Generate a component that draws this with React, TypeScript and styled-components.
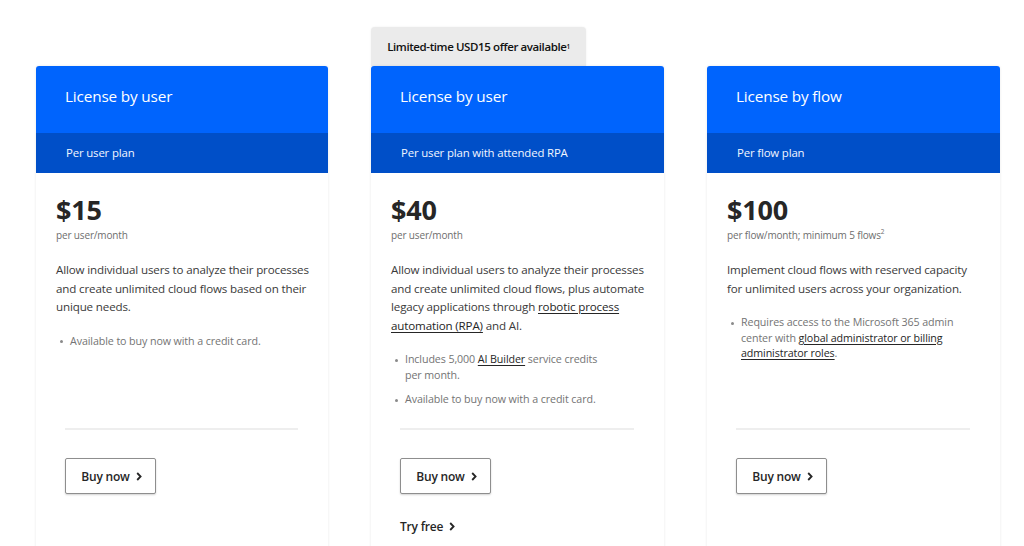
import React from "react";
import styled, { createGlobalStyle } from "styled-components";

const Global = createGlobalStyle`
  html, body { margin: 0; padding: 0; background: #fff; }
  body { font-family: "Open Sans", "Noto Sans", Arial, sans-serif; overflow: hidden; }
  * { box-sizing: border-box; }
`;

const Page = styled.div`
  width: 1024px;
  height: 546px;
  overflow: hidden;
  padding: 27px 0 0 36px;
`;

const Row = styled.div`
  display: grid;
  grid-template-columns: 292px 293px 293px;
  column-gap: 43px;
  align-items: stretch;
`;

const Column = styled.div<{ $badge?: boolean }>`
  display: flex;
  flex-direction: column;
  padding-top: ${(p) => (p.$badge ? 0 : 39)}px;
`;

const Badge = styled.div`
  align-self: flex-start;
  height: 39px;
  width: 215px;
  background: #ebebeb;
  border-radius: 4px 4px 0 0;
  display: flex;
  align-items: center;
  justify-content: center;
  font-size: 11.5px;
  font-weight: 600;
  letter-spacing: -0.4px;
  color: #111;
  box-shadow: 0 0 2px rgba(0, 0, 0, 0.08);
`;

const Sup = styled.sup`
  font-size: 6.5px;
  vertical-align: 5px;
  line-height: 0;
`;

const Card = styled.div`
  display: flex;
  flex-direction: column;
  height: 520px;
  background: #fff;
  border-radius: 3px 3px 0 0;
  box-shadow: 0 0 3px rgba(0, 0, 0, 0.09);
`;

const Header = styled.div`
  height: 67px;
  background: #0064fd;
  border-radius: 3px 3px 0 0;
  color: #fff;
  display: flex;
  align-items: center;
  padding: 0 0 8px 29px;
  font-size: 15.3px;
  letter-spacing: -0.15px;
`;

const SubHeader = styled.div`
  height: 40px;
  background: #004fc8;
  color: #f2f6ff;
  display: flex;
  align-items: center;
  padding: 0 0 1px 30px;
  font-size: 11.4px;
  letter-spacing: -0.15px;
`;

const Body = styled.div`
  flex: 1;
  padding: 21px 20px 0 20px;
  color: #333;
`;

const Price = styled.div`
  font-size: 27px;
  font-weight: 700;
  color: #262626;
  line-height: 32px;
  letter-spacing: -0.2px;
`;

const Unit = styled.div`
  font-size: 10px;
  color: #6e6e6e;
  margin-top: 2px;
  letter-spacing: -0.15px;
  white-space: nowrap;
`;

const Desc = styled.p`
  margin: 19px 0 0 0;
  font-size: 11.6px;
  line-height: 18.5px;
  color: #3a3a3a;
  letter-spacing: -0.15px;
  white-space: nowrap;
`;

const Link = styled.a`
  color: #262626;
  text-decoration: underline;
  text-underline-offset: 2px;
`;

const List = styled.ul`
  margin: 17px 0 0 0;
  padding: 0 0 0 14px;
  list-style: none;
  display: flex;
  flex-direction: column;
  gap: 9px;
`;

const Item = styled.li`
  position: relative;
  font-size: 10.7px;
  line-height: 15.6px;
  color: #747474;
  letter-spacing: -0.1px;
  white-space: nowrap;
  &::before {
    content: "";
    position: absolute;
    left: -10px;
    top: 6.5px;
    width: 3px;
    height: 3px;
    border-radius: 50%;
    background: #8a8a8a;
  }
`;

const Footer = styled.div`
  padding: 0 30px 0 29px;
  height: 158px;
`;

const Divider = styled.div`
  height: 2px;
  background: #eeeeee;
`;

const Button = styled.button`
  margin-top: 28px;
  height: 36px;
  width: 91px;
  border: 1px solid #8e8e8e;
  border-radius: 2px;
  background: #fff;
  box-shadow: 0 1px 2px rgba(0, 0, 0, 0.18);
  font-family: inherit;
  font-size: 12px;
  font-weight: 600;
  color: #262626;
  display: flex;
  align-items: center;
  justify-content: center;
  gap: 6px;
  padding: 0 0 0 2px;
  letter-spacing: -0.2px;
`;

const TextLink = styled.div`
  margin-top: 24px;
  font-size: 12px;
  font-weight: 600;
  color: #262626;
  display: flex;
  align-items: center;
  gap: 6px;
  letter-spacing: -0.2px;
`;

const Chevron = () => (
  <svg width="6" height="9" viewBox="0 0 6 9" aria-hidden="true">
    <path d="M1.2 1 L4.6 4.5 L1.2 8" fill="none" stroke="#262626" strokeWidth="1.8" />
  </svg>
);

type Plan = {
  badge?: React.ReactNode;
  title: string;
  sub: string;
  price: string;
  unit: React.ReactNode;
  desc: React.ReactNode;
  items: React.ReactNode[];
  tryFree?: boolean;
};

const plans: Plan[] = [
  {
    title: "License by user",
    sub: "Per user plan",
    price: "$15",
    unit: "per user/month",
    desc: (
      <>
        Allow individual users to analyze their processes
        <br />
        and create unlimited cloud flows based on their
        <br />
        unique needs.
      </>
    ),
    items: ["Available to buy now with a credit card."],
  },
  {
    badge: (
      <>
        Limited-time USD15 offer available<Sup>1</Sup>
      </>
    ),
    title: "License by user",
    sub: "Per user plan with attended RPA",
    price: "$40",
    unit: "per user/month",
    desc: (
      <>
        Allow individual users to analyze their processes
        <br />
        and create unlimited cloud flows, plus automate
        <br />
        legacy applications through <Link>robotic process</Link>
        <br />
        <Link>automation (RPA)</Link> and AI.
      </>
    ),
    items: [
      <>
        Includes 5,000 <Link>AI Builder</Link> service credits
        <br />
        per month.
      </>,
      "Available to buy now with a credit card.",
    ],
    tryFree: true,
  },
  {
    title: "License by flow",
    sub: "Per flow plan",
    price: "$100",
    unit: (
      <>
        per flow/month; minimum 5 flows<Sup>2</Sup>
      </>
    ),
    desc: (
      <>
        Implement cloud flows with reserved capacity
        <br />
        for unlimited users across your organization.
      </>
    ),
    items: [
      <>
        Requires access to the Microsoft 365 admin
        <br />
        center with <Link>global administrator or billing</Link>
        <br />
        <Link>administrator roles</Link>.
      </>,
    ],
  },
];

export default function App() {
  return (
    <>
      <Global />
      <Page>
        <Row>
          {plans.map((p, i) => (
            <Column key={i} $badge={!!p.badge}>
              {p.badge && <Badge>{p.badge}</Badge>}
              <Card>
                <Header>{p.title}</Header>
                <SubHeader>{p.sub}</SubHeader>
                <Body>
                  <Price>{p.price}</Price>
                  <Unit>{p.unit}</Unit>
                  <Desc>{p.desc}</Desc>
                  <List>
                    {p.items.map((it, j) => (
                      <Item key={j}>{it}</Item>
                    ))}
                  </List>
                </Body>
                <Footer>
                  <Divider />
                  <Button>
                    Buy now <Chevron />
                  </Button>
                  {p.tryFree && (
                    <TextLink>
                      Try free <Chevron />
                    </TextLink>
                  )}
                </Footer>
              </Card>
            </Column>
          ))}
        </Row>
      </Page>
    </>
  );
}
